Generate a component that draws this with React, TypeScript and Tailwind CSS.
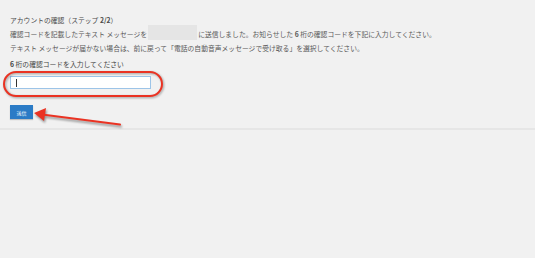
import React from 'react';

const App: React.FC = () => {
  return (
    <div
      className="relative w-[535px] h-[258px] bg-[#f1f1f1] text-[#595959] overflow-hidden"
      style={{ fontFamily: '"Noto Sans CJK JP", "Noto Sans", sans-serif' }}
    >
      {/* Verification form */}
      <div className="h-[130px] pl-[10px] pt-[15px] border-b-2 border-[#e6e6e6]">
        <div className="text-[6.8px] leading-[10px] text-[#4a4a4a]">
          アカウントの確認（ステップ <span className="font-bold">2/2</span>）
        </div>

        <div className="flex items-center h-[15px] text-[6.8px] leading-[10px] whitespace-nowrap">
          <span className="pt-[3px]">確認コードを記載したテキスト メッセージを</span>
          <span className="inline-block w-[49px] h-[15px] bg-[#e5e5e5] mx-[1px]" />
          <span className="pt-[3px]">
            に送信しました。お知らせした <span className="font-bold">6</span> 桁の確認コードを下記に入力してください。
          </span>
        </div>

        <div className="mt-[3px] text-[6.8px] leading-[10px] whitespace-nowrap">
          テキスト メッセージが届かない場合は、前に戻って「電話の自動音声メッセージで受け取る」を選択してください。
        </div>

        <div className="mt-[6px] text-[6.8px] leading-[10px] text-[#444]">
          <span className="font-bold">6</span> 桁の確認コードを入力してください
        </div>

        <div className="mt-[7px] w-[141px] h-[13px] bg-white border border-[#9cc4e8] flex items-center pl-[5px]">
          <span className="w-px h-[8px] bg-[#333]" />
        </div>

        <button className="mt-[16px] w-[23px] h-[14px] bg-[#2b7bc6] text-white text-[5px] leading-none flex items-center justify-center shadow-[0_1px_1px_rgba(0,0,0,0.2)]">
          送信
        </button>
      </div>

      {/* Red ellipse annotation around the input */}
      <div className="absolute left-[3px] top-[71px] w-[160px] h-[26px] rounded-full border-[2px] border-[#ea3323] drop-shadow-[1px_1px_1px_rgba(0,0,0,0.35)]" />

      {/* Red arrow annotation */}
      <svg
        className="absolute left-0 top-0 drop-shadow-[1px_2px_1px_rgba(0,0,0,0.4)]"
        width="535"
        height="258"
        viewBox="0 0 535 258"
      >
        <line x1="120" y1="124.5" x2="42" y2="114.5" stroke="#ea3323" strokeWidth="2" strokeLinecap="round" />
        <polygon points="34,113 46,108 44,121" fill="#ea3323" />
      </svg>
    </div>
  );
};

export default App;
